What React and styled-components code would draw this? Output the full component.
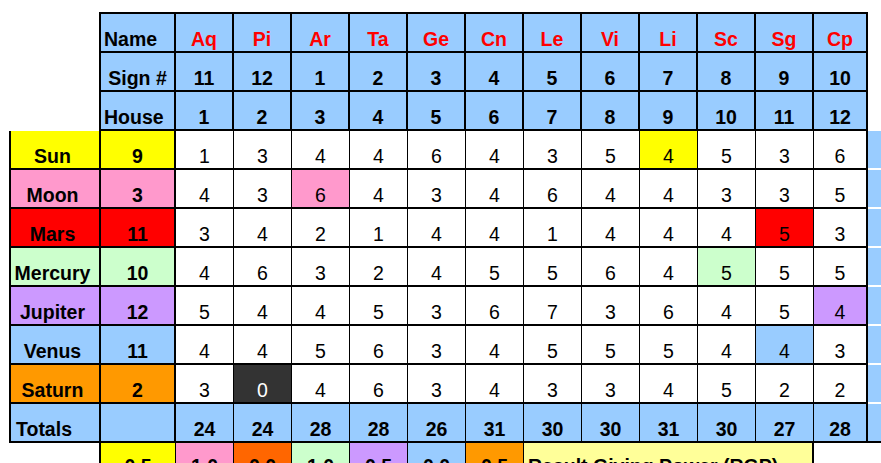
import React from 'react';
import styled, { createGlobalStyle } from 'styled-components';

const BLUE = '#99ccff';

const GlobalStyle = createGlobalStyle`
  html, body {
    margin: 0;
    padding: 0;
    background: #fff;
    overflow: hidden;
  }
  body {
    font-family: 'Liberation Sans', Arial, sans-serif;
  }
`;

const Page = styled.div`
  box-sizing: border-box;
  width: 881px;
  height: 463px;
  padding: 12px 0 0 9px;
  overflow: hidden;
`;

const Sheet = styled.div`
  display: grid;
  grid-template-columns: 92px 75px repeat(11, 58px) 54px 20px;
  grid-template-rows: 41px;
  grid-auto-rows: 39px;
  font-size: 19.5px;
  line-height: 20px;
  color: #000;
`;

const Cell = styled.div`
  box-sizing: border-box;
  display: flex;
  align-items: flex-end;
  justify-content: ${p => (p.$align === 'left' ? 'flex-start' : 'center')};
  padding: 0 ${p => p.$padRight || 0}px ${p => p.$padBottom ?? 2}px ${p => p.$padLeft || 0}px;
  background: ${p => p.$bg || '#fff'};
  color: ${p => p.$color || '#000'};
  font-weight: ${p => (p.$bold ? 700 : 400)};
  border-style: solid;
  border-color: #000;
  border-width: ${p => `${p.$top || 0}px ${p.$right || 0}px ${p.$bottom || 0}px ${p.$left || 0}px`};
  grid-column: span ${p => p.$span || 1};
  white-space: nowrap;
  overflow: hidden;
`;

// empty sheet area, only carries the line of the next cell
const Blank = styled(Cell)`
  background: #fff;
`;

const HeadCell = styled(Cell).attrs({ $bold: true, $bottom: 2, $bg: BLUE })``;

const PlanetCell = styled(Cell).attrs({ $bold: true, $left: 2, $right: 2, $bottom: 2, $padRight: 5 })``;

const NumCell = styled(Cell).attrs({ $bold: true, $right: 2, $bottom: 2 })``;

const ValueCell = styled(Cell).attrs({ $bottom: 2 })``;

const TotalCell = styled(Cell).attrs({ $bold: true, $bottom: 2, $bg: BLUE })``;

const EdgeCell = styled(Cell)`
  background: ${BLUE};
  border-bottom: 2px solid ${p => p.$line || '#fff'};
`;

const KeyCell = styled(Cell).attrs({ $bold: true, $bottom: 2, $padBottom: 4 })``;

const NoteCell = styled(Cell).attrs({
  $bold: true,
  $align: 'left',
  $padLeft: 4,
  $padBottom: 4,
  $right: 2,
  $bottom: 2,
  $span: 5,
  $bg: '#ffff99',
})``;

const SIGNS = ['Aq', 'Pi', 'Ar', 'Ta', 'Ge', 'Cn', 'Le', 'Vi', 'Li', 'Sc', 'Sg', 'Cp'];
const SIGN_NUMS = [11, 12, 1, 2, 3, 4, 5, 6, 7, 8, 9, 10];
const HOUSES = [1, 2, 3, 4, 5, 6, 7, 8, 9, 10, 11, 12];

const HEADER = [
  { label: 'Name', align: 'left', values: SIGNS, color: '#ff0000' },
  { label: 'Sign #', align: 'center', values: SIGN_NUMS },
  { label: 'House', align: 'left', values: HOUSES },
];

const PLANETS = [
  { name: 'Sun', bg: '#ffff00', num: 9, hl: 8, values: [1, 3, 4, 4, 6, 4, 3, 5, 4, 5, 3, 6] },
  { name: 'Moon', bg: '#ff99cc', num: 3, hl: 2, values: [4, 3, 6, 4, 3, 4, 6, 4, 4, 3, 3, 5] },
  { name: 'Mars', bg: '#ff0000', num: 11, hl: 10, values: [3, 4, 2, 1, 4, 4, 1, 4, 4, 4, 5, 3] },
  { name: 'Mercury', bg: '#ccffcc', num: 10, hl: 9, values: [4, 6, 3, 2, 4, 5, 5, 6, 4, 5, 5, 5] },
  { name: 'Jupiter', bg: '#cc99ff', num: 12, hl: 11, values: [5, 4, 4, 5, 3, 6, 7, 3, 6, 4, 5, 4] },
  { name: 'Venus', bg: BLUE, num: 11, hl: 10, values: [4, 4, 5, 6, 3, 4, 5, 5, 5, 4, 4, 3] },
  { name: 'Saturn', bg: '#ff9900', num: 2, hl: 1, hlBg: '#333333', hlColor: '#fff', values: [3, 0, 4, 6, 3, 4, 3, 3, 4, 5, 2, 2] },
];

const TOTALS = [24, 24, 28, 28, 26, 31, 30, 30, 31, 30, 27, 28];

const KEYS = [
  { bg: '#ffff00', value: '0.5' },
  { bg: '#ff99cc', value: '1.0' },
  { bg: '#ff6600', value: '0.0' },
  { bg: '#ccffcc', value: '1.0' },
  { bg: '#cc99ff', value: '0.5' },
  { bg: BLUE, value: '0.0' },
  { bg: '#ff9900', value: '0.5' },
];

const App = () => {
  return (
    <Page>
      <GlobalStyle />
      <Sheet>
        {HEADER.map((row, r) => (
          <React.Fragment key={row.label}>
            <Blank $right={2} />
            <HeadCell $top={r === 0 ? 2 : 0} $right={2} $align={row.align} $padLeft={row.align === 'left' ? 3 : 0}>
              {row.label}
            </HeadCell>
            {row.values.map((v, i) => (
              <HeadCell key={i} $top={r === 0 ? 2 : 0} $right={2} $color={row.color}>
                {v}
              </HeadCell>
            ))}
            <Blank />
          </React.Fragment>
        ))}

        {PLANETS.map(p => (
          <React.Fragment key={p.name}>
            <PlanetCell $bg={p.bg}>{p.name}</PlanetCell>
            <NumCell $bg={p.bg}>{p.num}</NumCell>
            {p.values.map((v, i) => (
              <ValueCell
                key={i}
                $right={i === 11 ? 2 : 1}
                $bg={i === p.hl ? p.hlBg || p.bg : '#fff'}
                $color={i === p.hl ? p.hlColor : undefined}
              >
                {v}
              </ValueCell>
            ))}
            <EdgeCell />
          </React.Fragment>
        ))}

        <TotalCell $left={2} $right={2} $align="left" $padLeft={5}>Totals</TotalCell>
        <TotalCell $right={2} />
        {TOTALS.map((t, i) => (
          <TotalCell key={i} $right={i === 11 ? 2 : 1}>
            {t}
          </TotalCell>
        ))}
        <EdgeCell $line="#000" />

        <Blank $right={2} />
        {KEYS.map((k, i) => (
          <KeyCell key={i} $bg={k.bg} $right={1}>
            {k.value}
          </KeyCell>
        ))}
        <NoteCell>Result Giving Power (RGP)</NoteCell>
        <Blank />
        <Blank />
      </Sheet>
    </Page>
  );
};

export default App;
